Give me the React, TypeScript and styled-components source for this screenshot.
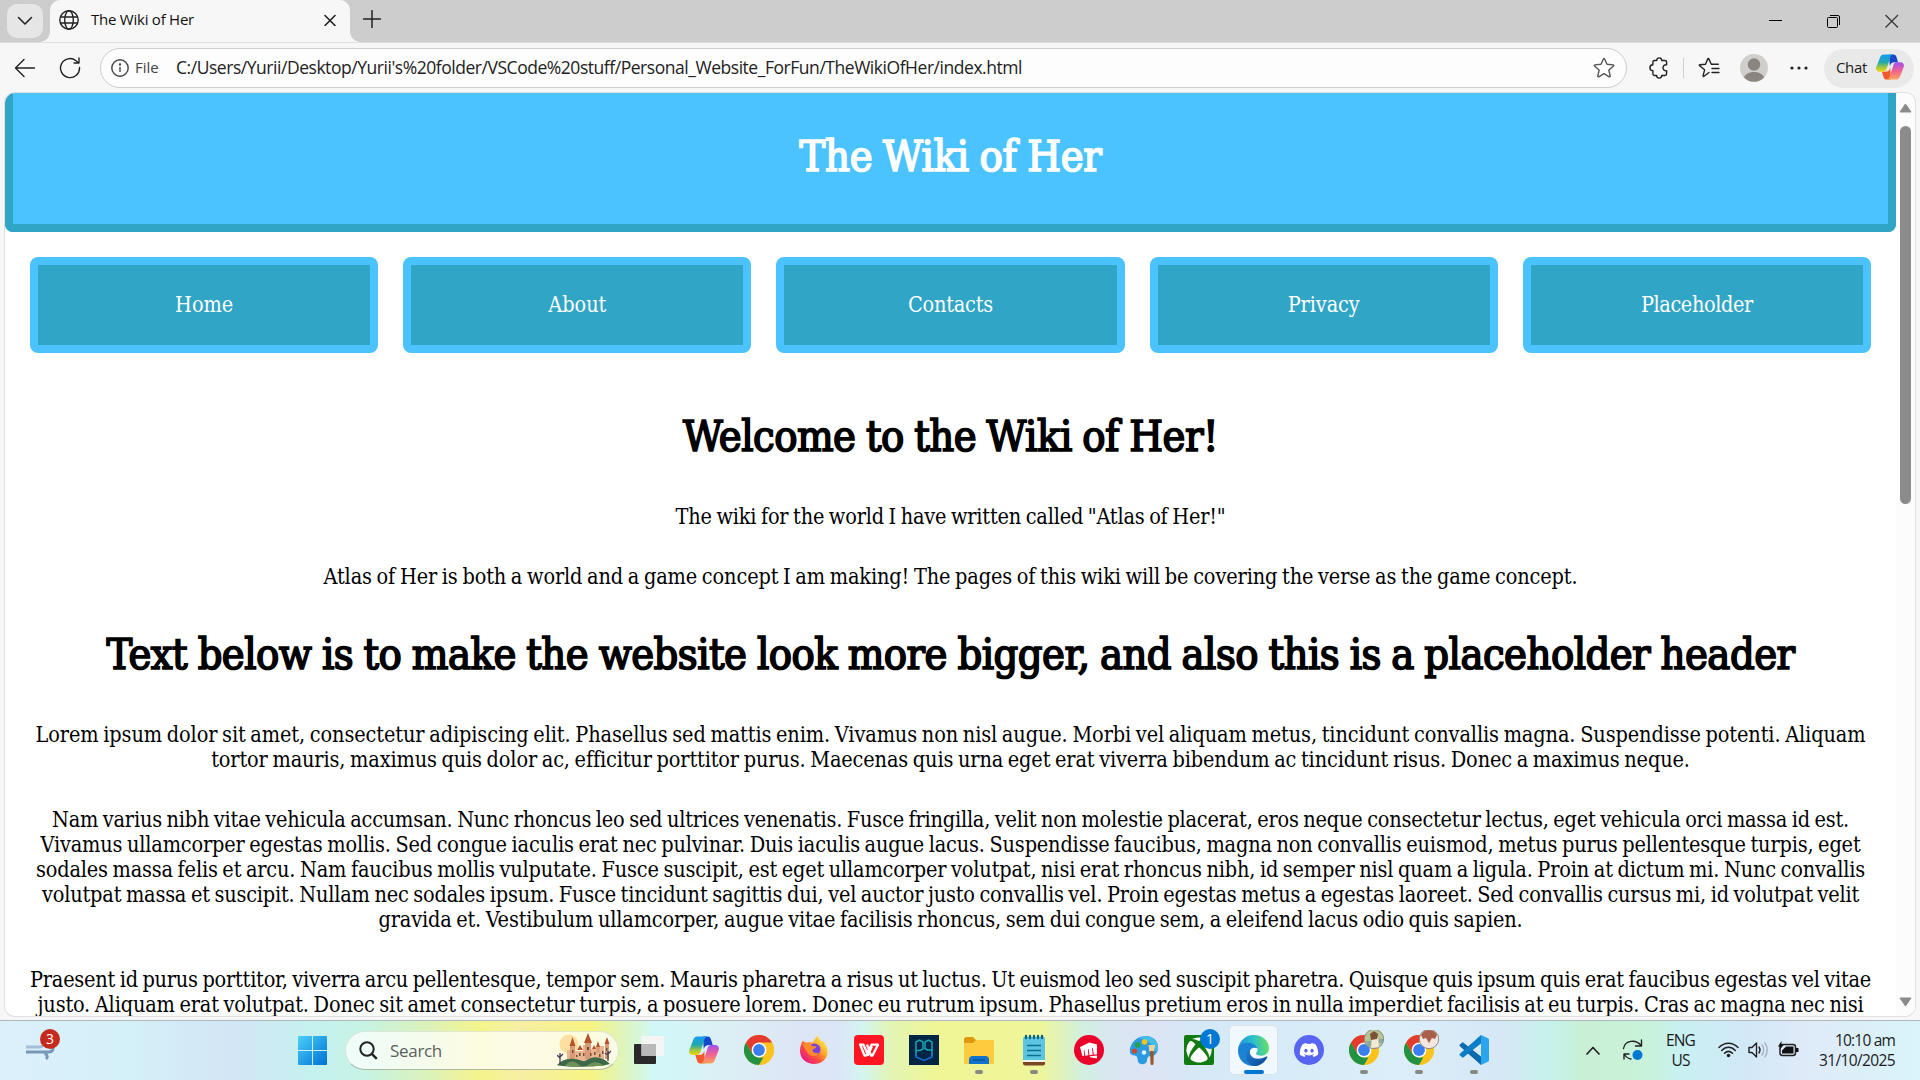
import React, { useLayoutEffect, useRef, useState } from "react";
import styled, { createGlobalStyle } from "styled-components";
import { FaDiscord, FaXbox } from "react-icons/fa";
import { SiRiotgames } from "react-icons/si";

const SERIF = '"DejaVu Serif Condensed", "DejaVu Serif", serif';
const UI = '"Open Sans", "Noto Sans", sans-serif';

const GlobalStyle = createGlobalStyle`
  * { box-sizing: border-box; }
  html, body { margin: 0; padding: 0; overflow: hidden; background: #f7f7f7; }
  svg { display: block; flex: none; }
`;

/* ---------- text set to a fixed measure ---------- */

const Measure = styled.span`
  display: inline-block;
  white-space: pre;
`;

function Fit({ width, children }: { width: number; children: string }) {
  const ref = useRef<HTMLSpanElement>(null);
  const [tracking, setTracking] = useState(0);
  useLayoutEffect(() => {
    if (ref.current) {
      const natural = ref.current.getBoundingClientRect().width;
      setTracking((width - natural) / children.length);
    }
  }, []);
  return (
    <Measure ref={ref} style={{ letterSpacing: `${tracking}px` }}>
      {children}
    </Measure>
  );
}

/* ---------- window ---------- */

const Desktop = styled.div`
  width: 1920px;
  height: 1080px;
  display: flex;
  flex-direction: column;
  overflow: hidden;
  font-family: ${UI};
  color: #1b1b1b;
`;

const TabStrip = styled.div`
  height: 42px;
  display: flex;
  background: #cdcdcd;
  padding-left: 7px;
  flex: none;
`;

const TabMenu = styled.div`
  width: 36px;
  height: 34px;
  margin-top: 4px;
  border-radius: 10px;
  background: #e6e6e6;
  display: grid;
  place-items: center;
`;

const Tab = styled.div`
  position: relative;
  width: 300px;
  height: 42px;
  margin-left: 7px;
  padding: 0 14px 3px 9px;
  display: flex;
  align-items: center;
  border-radius: 10px 10px 0 0;
  background: #f7f7f7;
  &::before, &::after {
    content: "";
    position: absolute;
    bottom: 0;
    width: 10px;
    height: 10px;
  }
  &::before { left: -10px; background: radial-gradient(circle at 0 0, transparent 9.5px, #f7f7f7 10px); }
  &::after { right: -10px; background: radial-gradient(circle at 100% 0, transparent 9.5px, #f7f7f7 10px); }
`;

const TabTitle = styled.div`
  flex: 1;
  margin-left: 12px;
  padding-bottom: 2px;
  font-size: 15px;
  line-height: 20px;
  color: #111;
`;

const NewTab = styled.div`
  margin: 10px 0 0 13px;
`;

const WindowButtons = styled.div`
  margin: 13px 21px 0 auto;
  display: flex;
  gap: 44px;
`;

const Toolbar = styled.div`
  height: 51px;
  flex: none;
  display: flex;
  align-items: center;
  padding: 0 6px 0 14px;
  background: #f7f7f7;
  border-top: 1px solid #dedede;
`;

const Address = styled.div`
  width: 1527px;
  height: 40px;
  margin-left: 19px;
  padding: 0 11px 0 10px;
  display: flex;
  align-items: center;
  border: 1px solid #cdcdcd;
  border-radius: 20px;
  background: #fdfdfd;
`;

const Scheme = styled.div`
  margin-left: 6px;
  width: 41px;
  padding-bottom: 3px;
  font-size: 15px;
  color: #444;
`;

const Url = styled.div`
  flex: 1;
  padding-bottom: 2px;
  font-size: 17.5px;
  color: #222;
`;

const ToolIcons = styled.div`
  flex: 1;
  display: flex;
  align-items: center;
  margin-left: 22px;
`;

const Divider = styled.div`
  width: 1px;
  height: 20px;
  margin: 0 14px 0 14px;
  background: #cfcfcf;
`;

const Avatar = styled.div`
  margin: 0 22px 0 20px;
`;

const ChatPill = styled.div`
  width: 90px;
  height: 39px;
  margin-left: auto;
  padding: 0 0 2px 12px;
  display: flex;
  align-items: center;
  gap: 9px;
  border-radius: 20px;
  background: #e9e9e9;
  font-size: 15px;
`;

const Viewport = styled.div`
  width: 1910px;
  height: 923px;
  flex: none;
  margin-left: 5px;
  display: flex;
  overflow: hidden;
  border-radius: 10px;
  background: #fff;
  box-shadow: 0 0 0 1px #e0e0e0;
`;

const Page = styled.main`
  width: 1891px;
  font-family: ${SERIF};
  font-size: 21.5px;
  line-height: 25px;
  word-spacing: -0.06em;
  color: #000;
  text-align: center;
`;

const Banner = styled.header`
  height: 139px;
  padding-top: 36px;
  background: #4bc3ff;
  border: 8px solid #30a5c5;
  border-top: 0;
  border-radius: 0 0 8px 8px;
  color: #fff;
`;

const Title = styled.h1`
  margin: 0;
  font-size: 43px;
  line-height: 54px;
  font-weight: 400;
  -webkit-text-stroke: 1.7px currentColor;
`;

const Nav = styled.nav`
  display: grid;
  grid-template-columns: repeat(5, 1fr);
  gap: 25px;
  padding: 25px;
`;

const NavButton = styled.div`
  height: 96px;
  padding-bottom: 2px;
  display: grid;
  place-items: center;
  border: 8px solid #4bc3ff;
  border-radius: 8px;
  background: #30a5c5;
  color: #fff;
`;

const Article = styled.section`
  padding-top: 31px;
`;

const Paragraph = styled.p`
  margin: 0 0 35px;
  display: flex;
  flex-direction: column;
  align-items: center;
`;

const HeadingBox = styled.div<{ $above?: number }>`
  margin: ${(p) => p.$above ?? 0}px 0 41px;
`;

const Scrollbar = styled.div`
  flex: 1;
  background: #fcfcfc;
  display: flex;
  flex-direction: column;
  align-items: center;
  padding: 10px 0 9px;
`;

const Thumb = styled.div`
  width: 11px;
  height: 378px;
  margin: 13px 0 auto;
  border-radius: 6px;
  background: #8b8b8b;
`;

/* ---------- taskbar ---------- */

const Taskbar = styled.footer`
  height: 60px;
  margin-top: 4px;
  padding-bottom: 1px;
  flex: none;
  display: flex;
  align-items: center;
  border-top: 1px solid #aeb9be;
  background: linear-gradient(90deg, #dcf0fa 0, #d4f0f8 130px, #d3e6f5 230px, #c5f1f0 310px, #c6f3e3 365px,
    #ddf2b8 430px, #f5f48c 480px, #f6efa4 520px, #f7f482 590px, #dff5b8 622px, #d0f8f9 655px, #dcf0f4 720px,
    #dde6f6 800px, #dbe6f6 840px, #d4f4f2 862px, #e3f5b5 890px, #f0f695 940px, #eef69a 1040px, #d0f0e0 1083px,
    #dae6f2 1110px, #dde4f4 1150px, #d5e9f6 1210px, #dbeefa 1400px, #d6e8f5 1500px, #c5f2ec 1550px,
    #c9f0d6 1580px, #c8f2da 1650px, #c8f0f2 1680px, #d3e8f7 1750px, #dfeaf8 1800px, #d9f4fa 1920px);
`;

const Widgets = styled.div`
  position: relative;
  width: 272px;
  padding: 0 0 0 25px;
`;

const Badge = styled.div<{ $color: string; $left: number; $top: number; $size: number }>`
  position: absolute;
  left: ${(p) => p.$left}px;
  top: ${(p) => p.$top}px;
  width: ${(p) => p.$size}px;
  height: ${(p) => p.$size}px;
  border-radius: 50%;
  background: ${(p) => p.$color};
  color: #fff;
  font-size: 14px;
  line-height: ${(p) => p.$size - 1}px;
  text-align: center;
`;

const StartButton = styled.div`
  width: 73px;
  padding-left: 26px;
`;

const Search = styled.div`
  width: 274px;
  height: 39px;
  padding: 0 7px 0 13px;
  display: flex;
  align-items: center;
  gap: 12px;
  border-radius: 20px;
  border: 1px solid rgba(120, 140, 110, 0.2);
  border-bottom-color: rgba(100, 120, 90, 0.5);
  background: rgba(255, 255, 255, 0.72);
  color: #5a605c;
  font-size: 17px;
`;

const Castle = styled.div`
  margin-left: auto;
`;

const Apps = styled.div`
  display: flex;
  margin-left: 2px;
`;

const AppButton = styled.div<{ $active?: boolean }>`
  position: relative;
  width: 49px;
  height: 50px;
  margin: 0 3px;
  display: grid;
  place-items: center;
  border-radius: 5px;
  border: 1px solid ${(p) => (p.$active ? "#dbe3ea" : "transparent")};
  background: ${(p) => (p.$active ? "rgba(246,250,255,.85)" : "transparent")};
`;

const Indicator = styled.div<{ $active?: boolean }>`
  position: absolute;
  bottom: 0;
  left: calc(50% - ${(p) => (p.$active ? 10 : 4)}px);
  width: ${(p) => (p.$active ? 20 : 8)}px;
  height: 4px;
  border-radius: 2px;
  background: ${(p) => (p.$active ? "#0078d4" : "#858b80")};
`;

const Tile = styled.div<{ $bg: string; $radius: string }>`
  width: 30px;
  height: 30px;
  display: grid;
  place-items: center;
  border-radius: ${(p) => p.$radius};
  background: ${(p) => p.$bg};
  color: #fff;
`;

const Tray = styled.div`
  flex: 1;
  display: flex;
  align-items: center;
  font-size: 15.5px;
  line-height: 20px;
  padding-right: 25px;
`;

const Stacked = styled.div<{ $width: number; $end?: boolean }>`
  width: ${(p) => p.$width}px;
  padding-bottom: 1px;
  display: flex;
  flex-direction: column;
  align-items: ${(p) => (p.$end ? "flex-end" : "center")};
`;

const Spacer = styled.div<{ $w: number }>`
  width: ${(p) => p.$w}px;
  flex: none;
`;

/* ---------- drawings ---------- */

const line = { fill: "none", stroke: "#222", strokeWidth: 1.4, strokeLinecap: "round" as const, strokeLinejoin: "round" as const };

const Copilot = ({ size, id }: { size: number; id: string }) => (
  <svg width={size} height={size} viewBox="0 0 30 30">
    <defs>
      <linearGradient id={id + "a"} x1="0" y1="0" x2="0" y2="1">
        <stop offset="0" stopColor="#159bf3" />
        <stop offset=".45" stopColor="#20a8b0" />
        <stop offset=".75" stopColor="#9fc83c" />
        <stop offset="1" stopColor="#f5d20a" />
      </linearGradient>
      <linearGradient id={id + "b"} x1="0" y1="0" x2="0" y2="1">
        <stop offset="0" stopColor="#a64df0" />
        <stop offset=".5" stopColor="#f06292" />
        <stop offset="1" stopColor="#ffa45c" />
      </linearGradient>
    </defs>
    <path d="M14 1.500h4.500c2 0 3 1 3.500 3L23.700 10h-4c-2 0-4 1-5 4z" fill="#1746c9" />
    <path d="M16 28.500h-4.500c-2 0-3-1-3.500-3L6.300 20h4c2 0 4-1 5-4z" fill="#f4592b" />
    <path d="M8.500 1.500H19c-2 0-3 1-3.600 3l-4 12.500c-.6 2-1.600 3-3.400 3H4c-3 0-4.500-2-3.700-5L4 5.500c.8-2.500 2-4 4.500-4z" fill={`url(#${id}a)`} />
    <path d="M21.500 28.500H11c2 0 3-1 3.600-3l4-12.500c.6-2 1.600-3 3.400-3h4c3 0 4.500 2 3.700 5L26 24.500c-.8 2.500-2 4-4.500 4z" fill={`url(#${id}b)`} />
  </svg>
);

const Chrome = () => (
  <svg width="30" height="30" viewBox="0 0 30 30">
    <circle cx="15" cy="15" r="15" fill="#fcc31e" />
    <path d="M2 7.500 8.500 18.700 15 22.500h6.500L15 30A15 15 0 0 1 2 7.500z" fill="#229342" />
    <path d="M21.500 18.700 15 30A15 15 0 0 0 28 7.500z" fill="#fcc31e" />
    <path d="M2 7.500A15 15 0 0 1 28 7.500H15L8.500 18.700z" fill="#e33b2e" />
    <circle cx="15" cy="15" r="7.400" fill="#fff" />
    <circle cx="15" cy="15" r="5.900" fill="#3a7ff0" />
  </svg>
);

const ChromeProfile = ({ variant }: { variant: number }) => (
  <svg width="40" height="40" viewBox="-2 -2 40 40">
    <g transform="translate(3 3)">
      <Chrome />
    </g>
    <g transform="translate(28 7)">
      <circle r="9.700" fill={variant ? "#f5e7df" : "#b9c493"} stroke="#8d8c84" />
      {variant ? (
        <path d="M-8-4A9 9 0 0 1 8-4L6 0 3-1 0 4-3-1-6 0z" fill="#a9604a" />
      ) : (
        <>
          <path d="M-3 9-2 0 4-1 5 8z" fill="#f0ead7" />
          <path d="M-4-5 0-8 4-5 3 0-3 1z" fill="#795238" />
          <path d="M-8 2h5v5h-4zM5 0h4v4H5z" fill="#8aa9a0" />
        </>
      )}
    </g>
  </svg>
);

const Firefox = () => (
  <svg width="30" height="30" viewBox="0 0 30 30">
    <defs>
      <linearGradient id="ff" x1=".9" y1=".1" x2=".15" y2=".9">
        <stop offset="0" stopColor="#fff04a" />
        <stop offset=".35" stopColor="#ffb02a" />
        <stop offset=".65" stopColor="#ff5038" />
        <stop offset="1" stopColor="#e5188a" />
      </linearGradient>
    </defs>
    <path d="M4 5.500C5 7 6 7.500 8 7.500c2-.5 4-.5 5.500 0C15 6.500 15.500 3 19 .5c.5 3 2.500 4.500 4 6.500l1-1c3 3.500 5 7.500 4.500 12C28 24.500 22 29 15 29S1 24 1 16C1 12 2 8.500 4 5.500z" fill="url(#ff)" />
    <circle cx="15.500" cy="14.500" r="6" fill="#7a42e0" />
    <path d="M3 9c4-2 8-1 10 2l4.500.5c-.5 2-2.500 2-4 3-.5 3 2.500 4.500 6 3-1 4-7 5-10 1.500C7.500 17 6 13 3 9z" fill="#ff8a2b" />
  </svg>
);

const Edge = () => (
  <svg width="31" height="31" viewBox="0 0 30 30">
    <defs>
      <linearGradient id="eg" x1="0" y1=".4" x2="1" y2=".3">
        <stop offset="0" stopColor="#2093d8" />
        <stop offset=".5" stopColor="#2bbfcd" />
        <stop offset="1" stopColor="#6be25b" />
      </linearGradient>
      <linearGradient id="eb" x1="0" y1="0" x2="1" y2="1">
        <stop offset="0" stopColor="#1b7fd1" />
        <stop offset="1" stopColor="#0c4794" />
      </linearGradient>
    </defs>
    <path d="M0 14C1 6 7 0 15 0c9 0 15 6 15 12.500 0 5-4 7.500-8 7.500-3 0-5-1-4.500-2.500 1-1 1.500-2 1.500-3.500 0-3-3-5.500-7.500-5.500C6 8.500 2 11 0 14z" fill="url(#eg)" />
    <path d="M0 15c0-4.500 4-7.500 9.500-7.500 5 0 8.500 2.500 9.500 5.500-5-2-9 1-8.500 7C11 25 15 28.500 20 29 10 32.500 0 26 0 15z" fill="#1b83d3" />
    <path d="M12.500 12.500c-3 5 .5 10.500 7 10.500 3.500 0 6-1.200 8-2.200 1-.3 1.200.4.7 1.200C25.500 27 21 30 16 30c-6.500-1-9.500-7-7.500-12.500.8-2.500 2.300-4 4-5z" fill="url(#eb)" />
  </svg>
);

const VsCode = () => (
  <svg width="30" height="30" viewBox="0 0 30 30">
    <path d="m1 9.500 2-1.700c.5-.4 1-.4 1.500 0L22 21.500v8.400L.9 11.200c-.6-.5-.5-1.200.1-1.700z" fill="#0b69ad" />
    <path d="m1 20.500 2 1.700c.5.400 1 .400 1.500 0L22 8.500V.1L.9 18.800c-.6.5-.5 1.200.1 1.700z" fill="#0d7dc8" />
    <path d="m22 0 7 3.200c.6.300 1 .8 1 1.500v20.600c0 .7-.4 1.200-1 1.500L22 30z" fill="#2ba6ee" />
  </svg>
);

const Explorer = () => (
  <svg width="30" height="30" viewBox="0 0 30 30">
    <path d="M0 4.500C0 3 1 2 2.500 2H9l3 3h16c1 0 2 1 2 2v5H0z" fill="#dc9a0c" />
    <path d="M0 8h9l3-3h16c1.200 0 2 .8 2 2v22H0z" fill="#fecb3e" />
    <path d="M5 29v-4.500C5 22.500 6.500 21 8.500 21h13c2 0 3.500 1.500 3.500 3.500V29z" fill="#1173cb" />
    <path d="M9 25h12" stroke="#0a4c93" strokeWidth="1.300" />
  </svg>
);

const Notepad = () => (
  <svg width="24" height="32" viewBox="0 0 24 32">
    <rect x="1" y="3" width="22" height="27" rx="1.500" fill="#5cc5e0" />
    <path d="M1 28h22v1.500a2 2 0 0 1-2 2H3a2 2 0 0 1-2-2z" fill="#7c4722" />
    <path d="M1 26h22v2H1z" fill="#f4f4ef" />
    <path d="M5 11.500h14M5 16.500h14M5 21.500h14" stroke="#0d6f8f" strokeWidth="1.500" />
    <path d="M4 2v2M8 2v2M12 2v2M16 2v2M20 2v2" stroke="#0f6684" strokeWidth="2.400" strokeLinecap="round" />
  </svg>
);

const Paint = () => (
  <svg width="30" height="30" viewBox="0 0 30 30">
    <path d="M17 1c7 0 12 5 12 11 0 6-3 9-7 9-3 0-4 2-4 4 0 3-3 5-6 4-3-.5-3-3-3.500-5.500C8 20 5.500 21 3 20c-3-1.500-2.500-6-1-9.500C4.500 5 10 1 17 1z" fill="#2a9be0" />
    <path d="M17 1c7 0 12 5 12 11 0 2-.5 3.500-1.500 5C24 9 18 5 10 3.300 12 2 14.500 1 17 1z" fill="#43bdec" />
    <circle cx="8.500" cy="10" r="2.800" fill="#2e9e44" />
    <circle cx="15.500" cy="7" r="2.800" fill="#f6c21b" />
    <circle cx="5.500" cy="16" r="2.600" fill="#d1482d" />
    <circle cx="15" cy="17.500" r="2.200" fill="#e6f6ff" />
    <path d="M19.500 10h6.500l-1 7h-4.500z" fill="#f0d09b" />
    <path d="M21 16h3.800l-.3 12.500a1.500 1.500 0 0 1-3 0z" fill="#965b2d" />
  </svg>
);

const CastleArt = () => (
  <svg width="54" height="34" viewBox="0 0 54 34">
    <circle cx="12" cy="11" r="9.500" fill="#fde0a0" />
    <path d="M10 17h5v-2l3 1v2h8v-6h6v4h6v-2h4v-1h5v16H10z" fill="#e8b591" />
    <path d="m12.500 13 3-9 3 9zM27 10l4-10 4 10zM39 14l2-6 2 6zM47.500 11l2.500-7 2.500 7zM20 17l3-5 3 5zM35 16l2-4 2 4z" fill="#b9502c" />
    <path d="M13 13h5v14h-5zM28 10h6v16h-6zM48 11h4v15h-4zM39.500 14h3v6h-3z" fill="#d99a78" />
    <path d="M15 17h1.500v3H15zM22 20h1.500v3H22zM30 14h2v3h-2zM37 19h1.500v3H37zM42 21h1.500v3H42zM49 15h1.500v3H49zM19 22h1.500v2H19zM26 20h1.500v3H26zM33 20h1.500v3H33zM45 18h1.500v3H45z" fill="#7c4a3a" />
    <path d="M0 32c5-5 10-7 17-6 5 0 8 3 11 2 8-6 17-5 25 3-8 3-45 4-53 1z" fill="#3c6a48" />
    <path d="M8 33c4-6 10-6 15 0zM30 33c5-5 12-5 17 0z" fill="#6f9257" />
    <path d="M3 31V20m0 5-3-3m3 2 3-3M51 28V18m0 4-3-2m3 1 3-3" stroke="#4b3a55" strokeWidth="1.300" fill="none" />
  </svg>
);

const Star = ({ lines }: { lines?: boolean }) => (
  <svg width="22" height="22" viewBox="0 0 22 22">
    {lines ? (
      <g {...line}>
        <path d="M11 15.500 6 19.300c-.5.400-1 .1-.9-.6l1.500-5.900-5-4c-.5-.4-.3-1 .3-1.100l5.600-.5L9.800 1.900c.3-.6.800-.6 1 0l2.500 5.300h7" />
        <path d="M14 11.500h7M14 15.500h7" />
      </g>
    ) : (
      <path {...line} stroke="#555" d="M10.500 1.700c.2-.5.800-.5 1 0l2.500 5.600 6.200.6c.6.100.8.700.3 1l-4.600 4.200 1.300 6c.1.600-.4 1-.9.700L11 16.700l-5.300 3.100c-.5.300-1-.1-.9-.7l1.300-6L1.500 8.900c-.5-.4-.3-1 .3-1L8 7.300z" />
    )}
  </svg>
);

const articleLines: [string, number][][] = [
  [
    ["Lorem ipsum dolor sit amet, consectetur adipiscing elit. Phasellus sed mattis enim. Vivamus non nisl augue. Morbi vel aliquam metus, tincidunt convallis magna. Suspendisse potenti. Aliquam", 1830],
    ["tortor mauris, maximus quis dolor ac, efficitur porttitor purus. Maecenas quis urna eget erat viverra bibendum ac tincidunt risus. Donec a maximus neque.", 1478],
  ],
  [
    ["Nam varius nibh vitae vehicula accumsan. Nunc rhoncus leo sed ultrices venenatis. Fusce fringilla, velit non molestie placerat, eros neque consectetur lectus, eget vehicula orci massa id est.", 1797],
    ["Vivamus ullamcorper egestas mollis. Sed congue iaculis erat nec pulvinar. Duis iaculis augue lacus. Suspendisse faucibus, magna non convallis euismod, metus purus pellentesque turpis, eget", 1820],
    ["sodales massa felis et arcu. Nam faucibus mollis vulputate. Fusce suscipit, est eget ullamcorper volutpat, nisi erat rhoncus nibh, id semper nisl quam a ligula. Proin at dictum mi. Nunc convallis", 1829],
    ["volutpat massa et suscipit. Nullam nec sodales ipsum. Fusce tincidunt sagittis dui, vel auctor justo convallis vel. Proin egestas metus a egestas laoreet. Sed convallis cursus mi, id volutpat velit", 1817],
    ["gravida et. Vestibulum ullamcorper, augue vitae facilisis rhoncus, sem dui congue sem, a eleifend lacus odio quis sapien.", 1144],
  ],
  [
    ["Praesent id purus porttitor, viverra arcu pellentesque, tempor sem. Mauris pharetra a risus ut luctus. Ut euismod leo sed suscipit pharetra. Quisque quis ipsum quis erat faucibus egestas vel vitae", 1841],
    ["justo. Aliquam erat volutpat. Donec sit amet consectetur turpis, a posuere lorem. Donec eu rutrum ipsum. Phasellus pretium eros in nulla imperdiet facilisis at eu turpis. Cras ac magna nec nisi", 1826],
  ],
];

const navItems: [string, number][] = [
  ["Home", 58],
  ["About", 58],
  ["Contacts", 85],
  ["Privacy", 72],
  ["Placeholder", 112],
];

const apps: { icon: React.ReactNode; open?: boolean; active?: boolean; badge?: string }[] = [
  {
    icon: (
      <svg width="30" height="30" viewBox="0 0 30 30">
        <rect x="0" y="9" width="22" height="20" rx="1" fill="#292929" />
        <rect x="7.500" y="1" width="22.500" height="20" rx="1" fill="#f5f5f5" />
        <path d="M7.500 9H22v12H7.500z" fill="#b9b9b9" />
      </svg>
    ),
  },
  { icon: <Copilot size={30} id="task" /> },
  { icon: <Chrome /> },
  { icon: <Firefox /> },
  {
    icon: (
      <Tile $bg="#ff1622" $radius="4px">
        <svg width="22" height="15" viewBox="0 0 22 15">
          <path d="M1 1.700h4.500L10 12l4-9M9 1.700 13 12.500h1.500L20 1.700h-6.500L8 12.500H6.500L2.500 2.500" fill="none" stroke="#fff" strokeWidth="2.300" strokeLinejoin="round" />
        </svg>
      </Tile>
    ),
  },
  {
    icon: (
      <Tile $bg="#022545" $radius="0">
        <svg width="20" height="24" viewBox="0 0 20 24" fill="none" strokeWidth="1.500">
          <path d="M2 18V4l3.500-2L9 4v7l-3 1.500H2M18 12h-4.500L11 10.500V4l3.500-2L18 4v14" stroke="#13a7b1" />
          <path d="M2 16v3l8 3.500 8-3.500v-3" stroke="#1470d5" />
        </svg>
      </Tile>
    ),
  },
  { icon: <Explorer />, open: true },
  { icon: <Notepad />, open: true },
  {
    icon: (
      <Tile $bg="#eb0029" $radius="50%">
        <SiRiotgames size={17} />
      </Tile>
    ),
  },
  { icon: <Paint /> },
  {
    icon: (
      <Tile $bg="#107c10" $radius="2px">
        <FaXbox size={26} />
      </Tile>
    ),
    badge: "1",
  },
  { icon: <Edge />, open: true, active: true },
  {
    icon: (
      <Tile $bg="#5865f2" $radius="50%">
        <FaDiscord size={20} />
      </Tile>
    ),
  },
  { icon: <ChromeProfile variant={0} />, open: true },
  { icon: <ChromeProfile variant={1} />, open: true },
  { icon: <VsCode />, open: true },
];

export default function App() {
  return (
    <Desktop>
      <GlobalStyle />
      <TabStrip>
        <TabMenu>
          <svg width="16" height="10" viewBox="0 0 16 10"><path d="m1.500 1.500 6.500 6.500 6.500-6.500" {...line} strokeWidth="1.600" /></svg>
        </TabMenu>
        <Tab>
          <svg width="20" height="20" viewBox="0 0 20 20" fill="none" stroke="#222" strokeWidth="1.400">
            <circle cx="10" cy="10" r="9.200" />
            <ellipse cx="10" cy="10" rx="4.300" ry="9.200" />
            <path d="M1.500 7h17M1.500 13h17" />
          </svg>
          <TabTitle><Fit width={103}>The Wiki of Her</Fit></TabTitle>
          <svg width="12" height="12" viewBox="0 0 12 12"><path d="m1 1.500 10 10M11 1.500 1 11.500" {...line} strokeWidth="1.600" /></svg>
        </Tab>
        <NewTab>
          <svg width="18" height="18" viewBox="0 0 18 18"><path d="M9 .5v17M.5 9h17" {...line} strokeWidth="1.500" /></svg>
        </NewTab>
        <WindowButtons>
          <svg width="14" height="15" viewBox="0 0 14 15"><path d="M0 7.500h13" stroke="#000" /></svg>
          <svg width="14" height="15" viewBox="0 0 14 15" fill="none" stroke="#000"><rect x=".5" y="4.500" width="10" height="10" rx="1" /><path d="M3 2.500h8q1.500 0 1.500 1.500v8" /></svg>
          <svg width="14" height="15" viewBox="0 0 14 15"><path d="m.5 2 12.500 12.500M13 2 .5 14.500" stroke="#333" strokeWidth="1.200" /></svg>
        </WindowButtons>
      </TabStrip>

      <Toolbar>
        <svg width="22" height="20" viewBox="0 0 22 20"><path d="M20.500 10H1.500M10 1.500 1.500 10l8.500 8.500" {...line} /></svg>
        <Spacer $w={23} />
        <svg width="22" height="22" viewBox="0 0 22 22"><path d="M20.500 10.500a9.500 9.500 0 1 1-3.500-6.800l2.500 2M20 1v5h-5" {...line} /></svg>
        <Address>
          <svg width="18" height="18" viewBox="0 0 18 18" fill="none" stroke="#444" strokeWidth="1.400"><circle cx="9" cy="9" r="8.200" /><path d="M9 8v5" /><circle cx="9" cy="5.500" r=".5" /></svg>
          <Scheme><Fit width={23.500}>File</Fit></Scheme>
          <Url><Fit width={846}>C:/Users/Yurii/Desktop/Yurii's%20folder/VSCode%20stuff/Personal_Website_ForFun/TheWikiOfHer/index.html</Fit></Url>
          <Star />
        </Address>
        <ToolIcons>
          <svg width="20" height="22" viewBox="0 0 20 22">
            <path {...line} d="M5.500 3.500h2.200c0-3.500 5-3.500 5 0H16c1 0 1.600.6 1.600 1.600v2.700c-4.800-.6-4.800 6.600 0 6v3c0 1-.6 1.700-1.600 1.700h-3.300c0 3.500-5 3.500-5 0H5.500c-1 0-1.600-.7-1.600-1.700v-3c-4-.3-4-5.700 0-6V5.100c0-1 .6-1.600 1.600-1.600z" />
          </svg>
          <Divider />
          <Star lines />
          <Avatar>
            <svg width="28" height="28" viewBox="0 0 28 28">
              <circle cx="14" cy="14" r="14" fill="#d1cfcb" />
              <circle cx="14" cy="10.500" r="6.200" fill="#8b8580" />
              <path d="M4 23.500c2-7.500 18-7.500 20 0a14 14 0 0 1-20 0z" fill="#8b8580" />
            </svg>
          </Avatar>
          <svg width="18" height="4" viewBox="0 0 18 4" fill="#222"><circle cx="2" cy="2" r="1.600" /><circle cx="9" cy="2" r="1.600" /><circle cx="16" cy="2" r="1.600" /></svg>
          <ChatPill>
            <Fit width={31}>Chat</Fit>
            <Copilot size={28} id="chat" />
          </ChatPill>
        </ToolIcons>
      </Toolbar>

      <Viewport>
        <Page>
          <Banner><Title><Fit width={302}>The Wiki of Her</Fit></Title></Banner>
          <Nav>
            {navItems.map(([label, width]) => (
              <NavButton key={label}><Fit width={width}>{label}</Fit></NavButton>
            ))}
          </Nav>
          <Article>
            <HeadingBox><Title><Fit width={535}>Welcome to the Wiki of Her!</Fit></Title></HeadingBox>
            <Paragraph><Fit width={550}>The wiki for the world I have written called "Atlas of Her!"</Fit></Paragraph>
            <Paragraph><Fit width={1254}>Atlas of Her is both a world and a game concept I am making! The pages of this wiki will be covering the verse as the game concept.</Fit></Paragraph>
            <HeadingBox $above={38}><Title><Fit width={1688}>Text below is to make the website look more bigger, and also this is a placeholder header</Fit></Title></HeadingBox>
            {articleLines.map((rows, i) => (
              <Paragraph key={i}>
                {rows.map(([text, width]) => <Fit key={text} width={width}>{text}</Fit>)}
              </Paragraph>
            ))}
          </Article>
        </Page>
        <Scrollbar>
          <svg width="13" height="10" viewBox="0 0 13 10"><path d="M6.500 1 12 9H1z" fill="#8b8b8b" stroke="#8b8b8b" strokeLinejoin="round" /></svg>
          <Thumb />
          <svg width="13" height="10" viewBox="0 0 13 10"><path d="M6.500 9 12 1H1z" fill="#8b8b8b" stroke="#8b8b8b" strokeLinejoin="round" /></svg>
        </Scrollbar>
      </Viewport>

      <Taskbar>
        <Widgets>
          <svg width="32" height="22" viewBox="0 0 32 22" fill="none" stroke="#7896b8" strokeWidth="3">
            <path d="M1 8h14q4-.5 3-5" stroke="#a5bdd6" />
            <path d="M1 13h23q5-.5 4-5M20 14q4 4 1 6" />
          </svg>
          <Badge $color="#c42b1c" $left={40} $top={-10} $size={20}>3</Badge>
        </Widgets>
        <StartButton>
          <svg width="29" height="29" viewBox="0 0 29 29">
            <defs><linearGradient id="win" gradientUnits="userSpaceOnUse" x1="0" y1="0" x2="29" y2="29"><stop offset="0" stopColor="#4bd0fb" /><stop offset="1" stopColor="#0070d2" /></linearGradient></defs>
            <path d="M0 1q0-1 1-1h13v14H0zM15 0h13q1 0 1 1v13H15zM0 15h14v14H1q-1 0-1-1zM15 15h14v13q0 1-1 1H15z" fill="url(#win)" />
          </svg>
        </StartButton>
        <Search>
          <svg width="19" height="19" viewBox="0 0 19 19" fill="none" stroke="#222" strokeWidth="2"><circle cx="8" cy="8" r="6.700" /><path d="m12.800 12.800 5 5" strokeWidth="2.400" /></svg>
          <Fit width={52}>Search</Fit>
          <Castle><CastleArt /></Castle>
        </Search>
        <Apps>
          {apps.map((app, i) => (
            <AppButton key={i} $active={app.active}>
              {app.icon}
              {app.badge && <Badge $color="#0078d4" $left={25} $top={3} $size={20}>{app.badge}</Badge>}
              {app.open && <Indicator $active={app.active} />}
            </AppButton>
          ))}
        </Apps>
        <Tray>
          <Spacer $w={85} />
          <svg width="14" height="9" viewBox="0 0 14 9"><path d="M1 8 7 1.500 13 8" {...line} strokeWidth="1.700" /></svg>
          <Spacer $w={22} />
          <svg width="22" height="22" viewBox="0 0 22 22">
            <path d="M1.500 9.500C3 1 14 0 19 6.500M19.500 1v6h-6M2 20v-5h5M2.500 15.500Q5 19.500 9 20" {...line} />
            <circle cx="15.500" cy="16" r="5" fill="#0078d4" />
          </svg>
          <Spacer $w={22} />
          <Stacked $width={29}><Fit width={29}>ENG</Fit><Fit width={18}>US</Fit></Stacked>
          <Spacer $w={23} />
          <svg width="21" height="16" viewBox="0 0 21 16"><path d="M1 5.500c5.500-5.700 13.500-5.700 19 0M3.700 8.500c4-4.200 9.600-4.200 13.600 0M6.500 11.300c2.500-2.500 5.500-2.500 8 0" {...line} strokeWidth="1.500" /><circle cx="10.500" cy="13.500" r="1.800" fill="#222" /></svg>
          <Spacer $w={9} />
          <svg width="21" height="18" viewBox="0 0 21 18"><path d="M1 6.500h3L8.500 2v14L4 11.500H1zM11 6q2 3 0 6" {...line} /><path d="M14 4q3.500 5 0 10M17 2q4.500 7 0 14" {...line} stroke="#a9b3bd" /></svg>
          <Spacer $w={9} />
          <svg width="21" height="18" viewBox="0 0 21 18"><rect x="2" y="3.500" width="15.500" height="11" rx="2.500" fill="none" stroke="#222" strokeWidth="1.500" /><path d="M8 5.500h7.500v7H4v-3zM18 7h2.500v4H18zM3.500 0 0 5.500h2.500L1.500 9 6 3.500H3.500z" fill="#111" /></svg>
          <Spacer $w={17} />
          <Stacked $width={79} $end><Fit width={60}>10:10 am</Fit><Fit width={76}>31/10/2025</Fit></Stacked>
        </Tray>
      </Taskbar>
    </Desktop>
  );
}
